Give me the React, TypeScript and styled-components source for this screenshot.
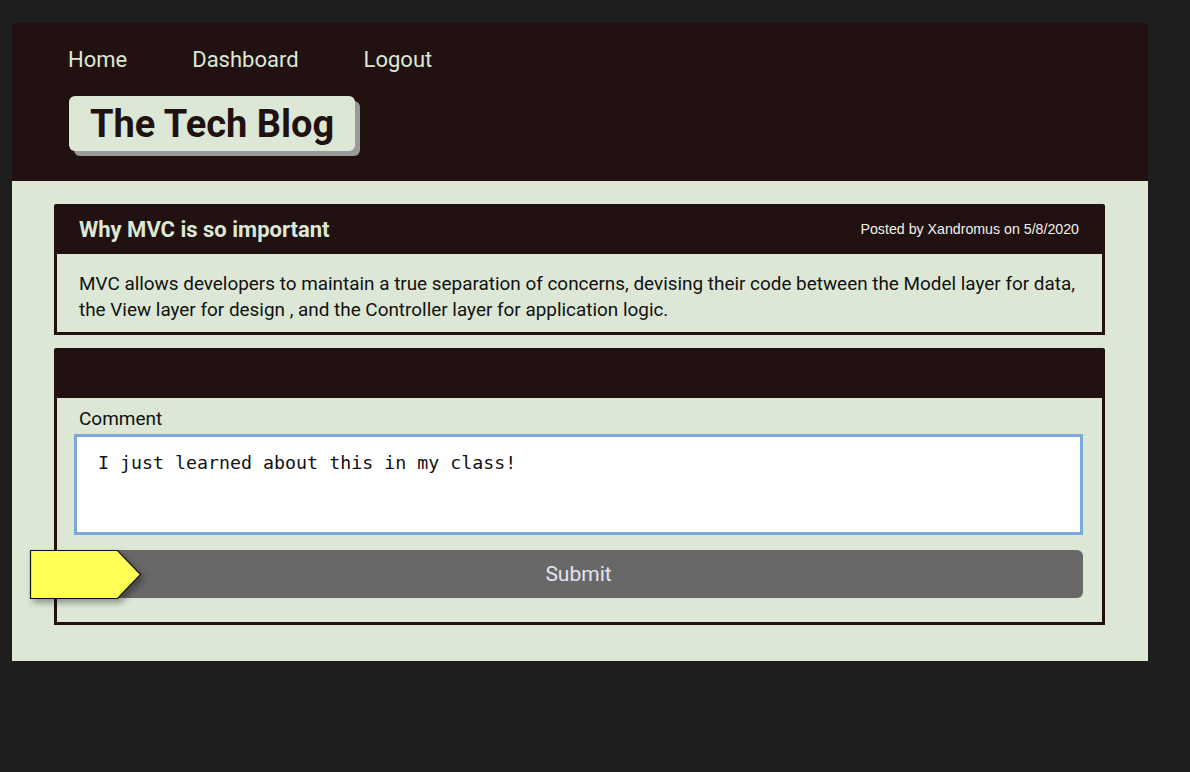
import React from "react";
import styled, { createGlobalStyle } from "styled-components";

const DARK = "#211111";
const LIGHT = "#dce8d5";

const Global = createGlobalStyle`
  html, body {
    margin: 0;
    padding: 0;
    background: #1e1e1e;
    font-family: Roboto, "Noto Sans", sans-serif;
  }
`;

const Page = styled.div`
  width: 1136px;
  margin: 23px 0 0 12px;
`;

const Header = styled.header`
  background: ${DARK};
  padding: 0 0 30px 0;
`;

const Nav = styled.nav`
  height: 73px;
  display: flex;
  align-items: center;
  gap: 65px;
  padding-left: 56px;
`;

const NavLink = styled.a`
  font-size: 22px;
  color: ${LIGHT};
  text-decoration: none;
  cursor: pointer;
`;

const Logo = styled.h1`
  display: inline-block;
  margin: 0 0 0 57px;
  height: 55px;
  box-sizing: border-box;
  padding: 0 21px;
  background: ${LIGHT};
  border-radius: 6px;
  box-shadow: 5px 5px 0 #9a9a9a;
  font-size: 38px;
  font-weight: 700;
  line-height: 57px;
  color: ${DARK};
  white-space: nowrap;
`;

const Main = styled.main`
  background: ${LIGHT};
  padding: 23px 43px 36px 42px;
  display: flex;
  flex-direction: column;
  gap: 13px;
`;

const Card = styled.section``;

const CardHead = styled.div`
  height: 50px;
  background: ${DARK};
  border-radius: 2px 2px 0 0;
  display: flex;
  align-items: center;
  justify-content: space-between;
  padding: 0 26px 0 25px;
`;

const CardTitle = styled.h2`
  margin: 0;
  font-size: 22px;
  font-weight: 700;
  color: ${LIGHT};
`;

const Meta = styled.span`
  font-family: "Liberation Sans", Arial, sans-serif;
  font-size: 14.2px;
  color: #f0f2ee;
`;

const CardBody = styled.div<{ $form?: boolean }>`
  border: 3px solid ${DARK};
  border-top: none;
  padding: ${(p) => (p.$form ? "9px 19px 24px 17px" : "17px 16px 9px 22px")};
`;

const BodyText = styled.p`
  margin: 0;
  font-size: 18.9px;
  line-height: 26px;
  color: #111;
`;

const Label = styled.label`
  display: block;
  font-size: 19px;
  line-height: 24px;
  color: #111;
  padding-left: 5px;
  margin-bottom: 3px;
`;

const TextArea = styled.textarea`
  display: block;
  width: 100%;
  height: 101px;
  box-sizing: border-box;
  border: 3px solid #7ca8dc;
  outline: none;
  background: #fff;
  padding: 15px 21px;
  resize: none;
  font-family: "DejaVu Sans Mono", monospace;
  font-size: 18.3px;
  line-height: 22px;
  color: #111;
`;

const ButtonRow = styled.div`
  position: relative;
  margin-top: 15px;
`;

const SubmitButton = styled.button`
  display: block;
  width: 100%;
  height: 48px;
  border: none;
  border-radius: 6px;
  background: #686868;
  color: #e4e3ef;
  font-family: Roboto, sans-serif;
  font-size: 21px;
  cursor: pointer;
`;

const Pointer = styled.svg`
  position: absolute;
  left: -44px;
  top: 0;
  overflow: visible;
  filter: drop-shadow(3px 4px 3px rgba(0, 0, 0, 0.35));
`;

export default function App() {
  return (
    <>
      <Global />
      <Page>
        <Header>
          <Nav>
            <NavLink>Home</NavLink>
            <NavLink>Dashboard</NavLink>
            <NavLink>Logout</NavLink>
          </Nav>
          <Logo>The Tech Blog</Logo>
        </Header>
        <Main>
          <Card>
            <CardHead>
              <CardTitle>Why MVC is so important</CardTitle>
              <Meta>Posted by Xandromus on 5/8/2020</Meta>
            </CardHead>
            <CardBody>
              <BodyText>
                MVC allows developers to maintain a true separation of concerns, devising their code between the Model layer for data, the View layer for design , and the Controller layer for application logic.
              </BodyText>
            </CardBody>
          </Card>
          <Card>
            <CardHead />
            <CardBody $form>
              <Label htmlFor="comment">Comment</Label>
              <TextArea id="comment" defaultValue="I just learned about this in my class!" />
              <ButtonRow>
                <SubmitButton>Submit</SubmitButton>
                <Pointer width="111" height="49" viewBox="0 0 111 49">
                  <polygon
                    points="0.5,0.5 87.5,0.5 110.5,24.5 87.5,48.5 0.5,48.5"
                    fill="#ffff55"
                    stroke="#111"
                    strokeWidth="1.2"
                  />
                </Pointer>
              </ButtonRow>
            </CardBody>
          </Card>
        </Main>
      </Page>
    </>
  );
}
